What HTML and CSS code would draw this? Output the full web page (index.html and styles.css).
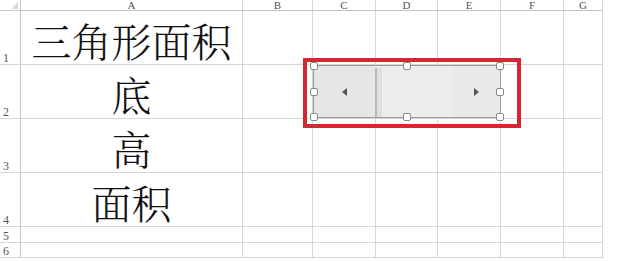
FILE: index.html
```html
<!DOCTYPE html>
<html lang="zh-CN">
<head>
  <meta charset="UTF-8">
  <title>三角形面积</title>
  <link rel="stylesheet" href="styles.css">
</head>
<body>
  <div class="page">
    <div class="sheet">
      <div class="corner"><span class="tri"></span></div>
      <div class="colhead">A</div>
      <div class="colhead">B</div>
      <div class="colhead">C</div>
      <div class="colhead">D</div>
      <div class="colhead">E</div>
      <div class="colhead">F</div>
      <div class="colhead">G</div>

      <div class="rowhead">1</div>
      <div class="cell big">三角形面积</div>
      <div class="cell"></div><div class="cell"></div><div class="cell"></div>
      <div class="cell"></div><div class="cell"></div><div class="cell"></div>

      <div class="rowhead">2</div>
      <div class="cell big">底</div>
      <div class="cell"></div><div class="cell"></div><div class="cell"></div>
      <div class="cell"></div><div class="cell"></div><div class="cell"></div>

      <div class="rowhead">3</div>
      <div class="cell big">高</div>
      <div class="cell"></div><div class="cell"></div><div class="cell"></div>
      <div class="cell"></div><div class="cell"></div><div class="cell"></div>

      <div class="rowhead">4</div>
      <div class="cell big">面积</div>
      <div class="cell"></div><div class="cell"></div><div class="cell"></div>
      <div class="cell"></div><div class="cell"></div><div class="cell"></div>

      <div class="rowhead">5</div>
      <div class="cell"></div><div class="cell"></div><div class="cell"></div>
      <div class="cell"></div><div class="cell"></div><div class="cell"></div><div class="cell"></div>

      <div class="rowhead">6</div>
      <div class="cell"></div><div class="cell"></div><div class="cell"></div>
      <div class="cell"></div><div class="cell"></div><div class="cell"></div><div class="cell"></div>
    </div>

    <!-- scroll bar form control, highlighted -->
    <div class="highlight">
      <div class="selection">
        <div class="scrollbar">
          <div class="btn btn-left">
            <svg width="5" height="8" viewBox="0 0 5 8"><path d="M5 0 L0 4 L5 8 Z" fill="#555"/></svg>
          </div>
          <div class="thumb"></div>
          <div class="track"></div>
          <div class="btn btn-right">
            <svg width="5" height="8" viewBox="0 0 5 8"><path d="M0 0 L5 4 L0 8 Z" fill="#555"/></svg>
          </div>
        </div>
        <span class="handle h-tl"></span>
        <span class="handle h-tm"></span>
        <span class="handle h-tr"></span>
        <span class="handle h-ml"></span>
        <span class="handle h-mr"></span>
        <span class="handle h-bl"></span>
        <span class="handle h-bm"></span>
        <span class="handle h-br"></span>
      </div>
    </div>
  </div>
</body>
</html>
```

FILE: styles.css
```css
body {
  margin: 0;
  background: #fff;
  font-family: "Liberation Serif", serif;
}

.page {
  position: relative;
  width: 619px;
  height: 261px;
}

.sheet {
  display: grid;
  grid-template-columns: 21px 222px 70px 63px 62px 63px 63px 39px;
  grid-template-rows: 11px 54px 54px 54px 54px 16px 15px;
  width: 603px;
}

.sheet > div {
  box-sizing: border-box;
  border-right: 1px solid #d6d6d6;
  border-bottom: 1px solid #d6d6d6;
}

.corner {
  position: relative;
  border-color: #c8c8c8 !important;
}

.tri {
  position: absolute;
  right: 2px;
  bottom: 1px;
  width: 0;
  height: 0;
  border-left: 7px solid transparent;
  border-bottom: 7px solid #d8d8d8;
}

.colhead {
  font-size: 11px;
  line-height: 10px;
  color: #555;
  text-align: center;
  border-bottom-color: #c4c4c4 !important;
  overflow: hidden;
}

.rowhead {
  font-size: 12px;
  line-height: 12px;
  color: #555;
  padding-left: 3px;
  display: flex;
  align-items: flex-end;
  border-right-color: #c4c4c4 !important;
  overflow: hidden;
}

.cell.big {
  display: flex;
  align-items: flex-end;
  justify-content: center;
  padding-bottom: 2px;
  font-family: "Noto Serif CJK SC", "Noto Sans CJK SC", serif;
  font-weight: 300;
  font-size: 40px;
  line-height: 44px;
  color: #111;
}

.highlight {
  position: absolute;
  left: 303px;
  top: 58px;
  width: 218px;
  height: 70px;
  box-sizing: border-box;
  border: 4px solid #d52731;
  padding: 3px 0 0 6px;
}

.selection {
  position: relative;
  width: 188px;
  height: 53px;
  box-sizing: border-box;
  border: 1px solid #9a9a9a;
}

.scrollbar {
  display: flex;
  height: 100%;
  background: #ececec;
}

.btn {
  display: flex;
  align-items: center;
  justify-content: center;
}

.btn-left {
  width: 61px;
  background: #e6e6e6;
}

.btn-right {
  width: 48px;
  background: #e9e9e9;
}

.thumb {
  width: 5px;
  margin-top: 2px;
  background: #e0e0e0;
  border-left: 2px solid #b8b8b8;
}

.track {
  flex: 1;
  background: #ededed;
}

.handle {
  position: absolute;
  width: 6px;
  height: 6px;
  background: #fff;
  border: 1px solid #8a8a8a;
  border-radius: 2px;
}

.h-tl { left: -4px; top: -4px; }
.h-tm { left: 89px; top: -4px; }
.h-tr { right: -4px; top: -4px; }
.h-ml { left: -4px; top: 22px; }
.h-mr { right: -4px; top: 22px; }
.h-bl { left: -4px; bottom: -4px; }
.h-bm { left: 89px; bottom: -4px; }
.h-br { right: -4px; bottom: -4px; }
```
